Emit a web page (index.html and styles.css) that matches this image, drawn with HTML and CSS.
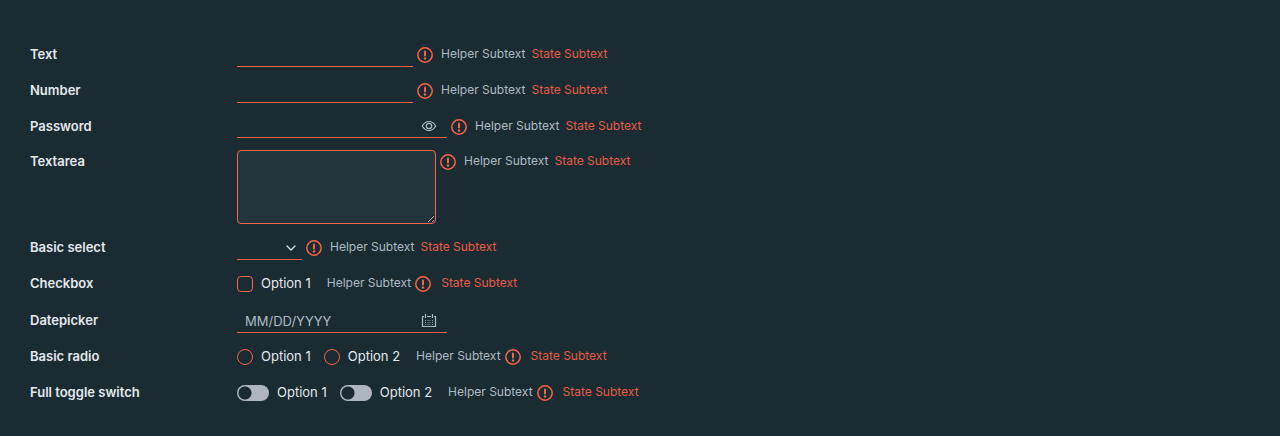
FILE: index.html
```
<!DOCTYPE html>
<html lang="en">
<head>
<meta charset="utf-8">
<title>Form controls</title>
<link rel="stylesheet" href="styles.css">
</head>
<body>
<svg class="symbols" aria-hidden="true">
  <symbol id="error" viewBox="0 0 16 16">
    <circle cx="8" cy="8" r="7.2" fill="none" stroke="currentColor" stroke-width="1.5"/>
    <path d="M8 4.5v4" fill="none" stroke="currentColor" stroke-width="2" stroke-linecap="round"/>
    <circle cx="8" cy="11.5" r="1.2" fill="currentColor"/>
  </symbol>
  <symbol id="eye" viewBox="0 0 16 16">
    <path d="M1.3 8C3 4.9 5.3 3.5 8 3.5S13 4.9 14.7 8C13 11.1 10.7 12.5 8 12.5S3 11.1 1.300 8Z" fill="none" stroke="currentColor" stroke-width="1.2"/>
    <circle cx="8" cy="8" r="2.7" fill="none" stroke="currentColor" stroke-width="1.2"/>
  </symbol>
  <symbol id="calendar" viewBox="0 0 16 16">
    <path d="M3 3.500H1.500v10h13v-10H13M6 3.500h4M4.500 1v4M11.500 1v4" fill="none" stroke="currentColor" stroke-width="1.2"/>
    <path d="M4 7.500h1m1.500 0h1m1 0h1m1.500 0h1M4 9.500h1m1.500 0h1m1 0h1m1.500 0h1M4 11.500h1m1.500 0h1m1 0h1m1.500 0h1" fill="none" stroke="currentColor" opacity=".8"/>
  </symbol>
  <symbol id="chevron" viewBox="0 0 16 16">
    <path d="M4 6l4 4 4-4" fill="none" stroke="currentColor" stroke-width="1.4" stroke-linecap="round" stroke-linejoin="round"/>
  </symbol>
</svg>
<form class="form">
  <div class="row">
    <label class="label" for="text">Text</label>
    <div class="control">
      <input class="input" id="text" type="text">
      <svg class="icon error"><use href="#error"/></svg>
      <span class="helper">Helper Subtext</span><span class="state">State Subtext</span>
    </div>
  </div>
  <div class="row">
    <label class="label" for="number">Number</label>
    <div class="control">
      <input class="input" id="number" type="number">
      <svg class="icon error"><use href="#error"/></svg>
      <span class="helper">Helper Subtext</span><span class="state">State Subtext</span>
    </div>
  </div>
  <div class="row">
    <label class="label" for="password">Password</label>
    <div class="control">
      <div class="group group-password">
        <input class="group-input" id="password" type="password">
        <button class="icon-button" type="button" aria-label="Show password"><svg class="icon"><use href="#eye"/></svg></button>
      </div>
      <svg class="icon error"><use href="#error"/></svg>
      <span class="helper">Helper Subtext</span><span class="state">State Subtext</span>
    </div>
  </div>
  <div class="row">
    <label class="label" for="textarea">Textarea</label>
    <div class="control">
      <textarea class="textarea" id="textarea"></textarea>
      <svg class="icon error"><use href="#error"/></svg>
      <span class="helper">Helper Subtext</span><span class="state">State Subtext</span>
    </div>
  </div>
  <div class="row">
    <label class="label" for="select">Basic select</label>
    <div class="control">
      <div class="select-wrap">
        <select class="select" id="select"><option></option></select>
        <svg class="icon chevron"><use href="#chevron"/></svg>
      </div>
      <svg class="icon error"><use href="#error"/></svg>
      <span class="helper">Helper Subtext</span><span class="state">State Subtext</span>
    </div>
  </div>
  <div class="row row-checkbox" role="group" aria-labelledby="checkbox-label">
    <span class="label" id="checkbox-label">Checkbox</span>
    <div class="control options">
      <label class="option"><input class="box" type="checkbox">Option 1</label>
      <span class="helper">Helper Subtext</span>
      <svg class="icon error"><use href="#error"/></svg>
      <span class="state">State Subtext</span>
    </div>
  </div>
  <div class="row">
    <label class="label" for="date">Datepicker</label>
    <div class="control">
      <div class="group">
        <input class="group-input" id="date" type="text" placeholder="MM/DD/YYYY">
        <button class="icon-button" type="button" aria-label="Choose date"><svg class="icon"><use href="#calendar"/></svg></button>
      </div>
    </div>
  </div>
  <div class="row" role="radiogroup" aria-labelledby="radio-label">
    <span class="label" id="radio-label">Basic radio</span>
    <div class="control options">
      <label class="option"><input class="box round" type="radio" name="radio">Option 1</label>
      <label class="option"><input class="box round" type="radio" name="radio">Option 2</label>
      <span class="helper">Helper Subtext</span>
      <svg class="icon error"><use href="#error"/></svg>
      <span class="state">State Subtext</span>
    </div>
  </div>
  <div class="row" role="group" aria-labelledby="toggle-label">
    <span class="label" id="toggle-label">Full toggle switch</span>
    <div class="control options">
      <label class="option"><input class="toggle" type="checkbox">Option 1</label>
      <label class="option"><input class="toggle" type="checkbox">Option 2</label>
      <span class="helper">Helper Subtext</span>
      <svg class="icon error"><use href="#error"/></svg>
      <span class="state">State Subtext</span>
    </div>
  </div>
</form>
</body>
</html>
```
FILE: styles.css
```
:root {
  --bg: #1b2b32;
  --field: #22343c;
  --danger: #f76549;
  --muted: #adbbc4;
}
* { box-sizing: border-box; }
body {
  margin: 0;
  background: var(--bg);
  color: #e3e9ed;
  font: 13px/22px Inter, "Open Sans", sans-serif;
}
input, select, textarea, button { font: inherit; color: inherit; margin: 0; border-radius: 0; }
.symbols { position: absolute; width: 0; height: 0; }
.form {
  display: flex;
  flex-direction: column;
  gap: 12px;
  padding: 43px 30px 31px;
}
.row { display: grid; grid-template-columns: 207px 1fr; }
.row-checkbox { min-height: 25px; }
.label { font-weight: 600; }
.control { display: flex; align-items: flex-start; }
.options { min-height: 24px; }
.input {
  width: 176px;
  height: 24px;
  padding: 0 8px;
  background: none;
  border: 0;
  border-bottom: 1px solid var(--danger);
}
.icon { display: block; flex: none; width: 16px; height: 16px; }
.error { margin: 4px 8px 0 4px; color: var(--danger); }
.helper, .state { font-size: 12px; white-space: nowrap; }
.helper { color: var(--muted); }
.state { margin-left: 6px; color: #e65c47; }
.group {
  display: flex;
  align-items: center;
  width: 210px;
  height: 24px;
  padding: 0 10px 0 8px;
  border-bottom: 1px solid var(--danger);
}
.group-password { height: 23px; }
.group-input { flex: 1; min-width: 0; height: 22px; padding: 0; border: 0; background: none; }
.group-input::placeholder { color: var(--muted); opacity: 1; }
.icon-button { padding: 0; border: 0; background: none; color: var(--muted); }
.textarea {
  display: block;
  width: 199px;
  height: 74px;
  padding: 4px 8px;
  border: 1px solid var(--danger);
  border-radius: 4px;
  background: var(--field);
  resize: both;
}
.select-wrap { display: grid; align-items: center; width: 65px; }
.select {
  grid-area: 1 / 1;
  height: 24px;
  padding: 0 24px 0 8px;
  appearance: none;
  background: none;
  border: 0;
  border-bottom: 1px solid var(--danger);
}
.chevron { grid-area: 1 / 1; justify-self: end; margin-right: 3px; color: #d5dde2; pointer-events: none; }
.option { display: flex; gap: 8px; margin-right: 13px; white-space: nowrap; }
.options .helper { margin-left: 3px; }
.options .error { margin-right: 4px; }
.box {
  appearance: none;
  width: 16px;
  height: 16px;
  margin-top: 4px;
  border: 1px solid var(--danger);
  border-radius: 4px;
}
.round { border-radius: 50%; }
.toggle {
  appearance: none;
  width: 32px;
  height: 16px;
  margin-top: 4px;
  border-radius: 8px;
  background: radial-gradient(circle at 8px 8px, var(--bg) 6px, #adb5bd 7px);
}
```
